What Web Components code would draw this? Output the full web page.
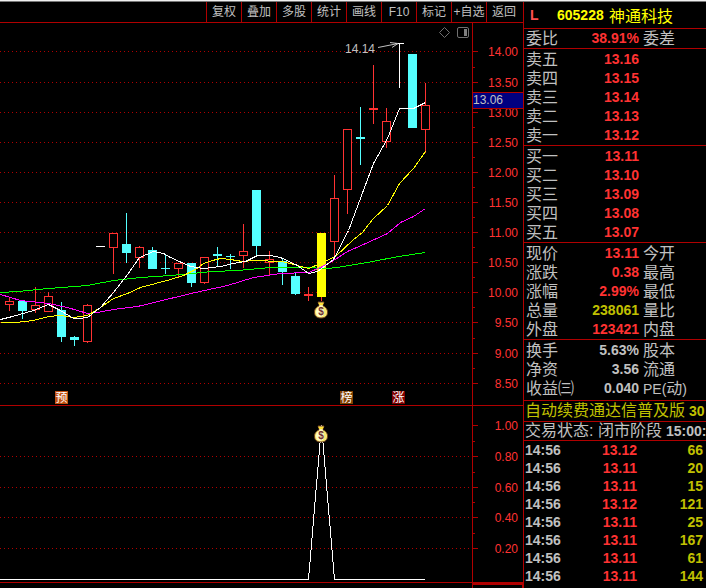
<!DOCTYPE html>
<html lang="zh-CN">
<head>
<meta charset="utf-8">
<title>605228 神通科技</title>
<style>
  body {
    margin: 0;
    background: #000;
    color: #c0c0c0;
    font-family: "Liberation Sans", "Noto Sans CJK SC", sans-serif;
    font-size: 12px;
  }
</style>
</head>
<body>
<stock-terminal>
  <tool-bar slot="tools">
    <tool-button>复权</tool-button>
    <tool-button>叠加</tool-button>
    <tool-button>多股</tool-button>
    <tool-button>统计</tool-button>
    <tool-button>画线</tool-button>
    <tool-button>F10</tool-button>
    <tool-button>标记</tool-button>
    <tool-button>+自选</tool-button>
    <tool-button>返回</tool-button>
  </tool-bar>
  <price-chart slot="chart"></price-chart>
  <signal-chart slot="chart"></signal-chart>

  <quote-title slot="quote" code="605228">神通科技</quote-title>
  <quote-group slot="quote" name="ratio"></quote-group>
  <quote-group slot="quote" name="sell"></quote-group>
  <quote-group slot="quote" name="buy"></quote-group>
  <quote-group slot="quote" name="price"></quote-group>
  <quote-group slot="quote" name="company"></quote-group>
  <quote-note slot="quote" class="notice">自动续费通达信普及版<b slot="value">30</b></quote-note>
  <quote-note slot="quote" class="status">交易状态: 闭市阶段<b slot="value">15:00:</b></quote-note>
  <tick-list slot="quote"></tick-list>
</stock-terminal>

<script>
const quotes = {
  ratio: [['委比', '38.91%', 'up', '委差']],
  sell: [
    ['卖五', '13.16', 'up', ''],
    ['卖四', '13.15', 'up', ''],
    ['卖三', '13.14', 'up', ''],
    ['卖二', '13.13', 'up', ''],
    ['卖一', '13.12', 'up', '']
  ],
  buy: [
    ['买一', '13.11', 'up', ''],
    ['买二', '13.10', 'up', ''],
    ['买三', '13.09', 'up', ''],
    ['买四', '13.08', 'up', ''],
    ['买五', '13.07', 'up', '']
  ],
  price: [
    ['现价', '13.11', 'up', '今开'],
    ['涨跌', '0.38', 'up', '最高'],
    ['涨幅', '2.99%', 'up', '最低'],
    ['总量', '238061', 'vol', '量比'],
    ['外盘', '123421', 'up', '内盘']
  ],
  company: [
    ['换手', '5.63%', '', '股本'],
    ['净资', '3.56', '', '流通'],
    ['收益㈢', '0.040', '', '<small>PE(</small>动<small>)</small>']
  ]
}

const ticks = [
  ['14:56', '13.12', 66],
  ['14:56', '13.11', 20],
  ['14:56', '13.11', 15],
  ['14:56', '13.12', 121],
  ['14:56', '13.11', 25],
  ['14:56', '13.11', 167],
  ['14:56', '13.11', 61],
  ['14:56', '13.11', 144]
]

// x, wick top, wick bottom, body top, body bottom, type
const candles = [
  [9, 298, 310, 301, 304, 'rise'],
  [22, 301, 318, 301, 310, 'fall'],
  [35, 287, 312, 305, 309, 'rise'],
  [48, 292, 311, 296, 311, 'rise'],
  [61, 302, 341, 310, 336, 'fall'],
  [74, 336, 345, 337, 339, 'fall'],
  [87, 304, 342, 305, 341, 'rise'],
  [100, 246, 246, 246, 246, 'flat'],
  [113, 233, 273, 233, 247, 'rise'],
  [126, 213, 262, 244, 252, 'fall'],
  [139, 246, 267, 247, 257, 'rise'],
  [152, 247, 268, 250, 268, 'fall'],
  [165, 254, 273, 268, 268, 'fall'],
  [178, 263, 277, 263, 268, 'rise'],
  [191, 263, 286, 263, 282, 'fall'],
  [204, 257, 283, 257, 282, 'rise'],
  [217, 247, 266, 254, 255, 'fall'],
  [230, 254, 268, 256, 256, 'fall'],
  [243, 224, 267, 251, 255, 'rise'],
  [256, 190, 254, 190, 245, 'fall'],
  [269, 251, 274, 259, 262, 'rise'],
  [282, 259, 284, 261, 271, 'fall'],
  [295, 273, 294, 276, 293, 'fall'],
  [308, 287, 300, 294, 295, 'rise'],
  [321, 233, 300, 233, 296, 'mark'],
  [334, 175, 256, 198, 241, 'rise'],
  [347, 129, 213, 129, 189, 'rise'],
  [360, 107, 164, 137, 138, 'fall'],
  [373, 65, 123, 108, 109, 'rise'],
  [386, 108, 147, 121, 141, 'rise'],
  [399, 43, 87, 43, 43, 'flat'],
  [412, 54, 127, 54, 127, 'fall'],
  [425, 83, 152, 105, 129, 'rise']
]

const averages = {
  '#00ff00': '0,292 18,291 48,288 87,285 113,280 140,277 170,275 212,271 237,270 270,267 303,267 327,268 337,267 367,262 398,256 425,252',
  '#ff00ff': '0,294 20,300 48,303 67,307 87,313 97,312 113,309 137,306 170,298 195,292 227,285 253,277 280,273 308,272 320,267 333,260 347,251 363,244 387,233 400,222 413,216 425,208',
  '#ffff00': '0,322 15,322 33,320 48,316 60,315 73,317 87,315 100,307 113,298 127,293 140,287 170,279 183,275 195,269 203,263 212,260 220,258 230,259 242,261 253,260 282,261 297,265 308,268 320,263 335,256 353,239 362,232 372,219 387,205 399,183 413,168 425,151',
  '#ffffff': '0,319 12,316 33,310 48,304 60,310 73,318 78,318 87,317 100,307 113,292 127,274 139,257 153,251 163,253 170,257 190,266 203,268 220,266 233,263 245,261 257,255 270,255 280,257 297,265 308,273 317,271 333,259 348,230 373,163 387,138 399,108 413,108 417,106 425,102'
}

function define(name, html, setup) {
  const template = document.createElement('template')
  template.innerHTML = html
  customElements.define(name, class extends HTMLElement {
    constructor() {
      super()
      this.attachShadow({ mode: 'open' })
      this.shadowRoot.appendChild(template.content.cloneNode(true))
      if (setup) setup(this, this.shadowRoot)
    }
  })
}

const chartStyle = `
  <style>
    :host { display: block; border-bottom: 1px solid #b00000; }
    svg { display: block; width: 100%; height: auto; }
    text { font-size: 12px; fill: #c0c0c0; }
    .shape { shape-rendering: crispEdges; fill: none; }
    .axis { stroke: #b00000; }
    .dots { stroke: #b00000; stroke-dasharray: 1 3; }
    .scale text { fill: #ff3232; text-anchor: end; }
    .rise { stroke: #ff3232; fill: #000; }
    .fall { stroke: #54ffff; fill: #54ffff; }
    .mark { stroke: #ffff00; fill: #ffff00; }
    .flat { stroke: #fff; }
    .wick { stroke: #ff3232; }
    .badge text { fill: #fff; text-anchor: middle; }
    .bag text { font-size: 10px; font-weight: bold; fill: #703030; text-anchor: middle; }
  </style>
`

// 坐标轴: 主刻度 + 中间刻度
function scale(marks, top, bottom, skipFirst) {
  let shape = `<path class="axis" d="M472.5 ${top}V${bottom}"/>`
  let labels = ''
  marks.forEach(([value, y], i) => {
    if (!(skipFirst && i === 0)) shape += `<path class="dots" d="M0 ${y}.5H471"/>`
    shape += `<path class="axis" d="M472 ${y}.5h6"/>`
    if (i < marks.length - 1) {
      const mid = Math.round((y + marks[i + 1][1]) / 2)
      shape += `<path class="axis" d="M472 ${mid}.5h3"/>`
    }
    labels += `<text x="518" y="${y + 5}">${value}</text>`
  })
  return `<g class="shape">${shape}</g><g class="scale">${labels}</g>`
}

function candle([x, high, low, top, bottom, type]) {
  const c = x + 0.5
  if (type === 'mark') {
    return `<path class="wick" d="M${c} ${bottom}V${low + 1}"/>
      <rect class="mark" x="${x - 3.5}" y="${top + 0.5}" width="8" height="${bottom - top}"/>`
  }
  let out = `<path class="${type}" d="M${c} ${high}V${low + 1}"/>`
  if (bottom - top < 2) {
    for (let y = top; y <= bottom; y++) out += `<path class="${type}" d="M${x - 4} ${y}.5h9"/>`
  } else {
    out += `<rect class="${type}" x="${x - 3.5}" y="${top + 0.5}" width="8" height="${bottom - top}"/>`
  }
  return out
}

function bag(x, y) {
  return `<g class="bag" transform="translate(${x} ${y})">
    <path d="M-3 0L3 0L1.500 3.500C5 5 7 8 6.500 11C6 15 3 16 0 16C-3 16 -6 15 -6.500 11C-7 8 -5 5 -1.500 3.500Z" fill="#f8e870" stroke="#704020"/>
    <ellipse cx="-1" cy="10" rx="4" ry="5" fill="#fffcc8"/>
    <path d="M-3 .5L0 1.500L3 .5L1.500 3.500H-1.500Z" fill="#ffe030"/>
    <path d="M-2 4H2" stroke="#fff"/>
    <text x="0" y="13">$</text>
  </g>`
}

function badge(x, text, fill) {
  return `<g class="badge"><rect x="${x}" y="391" width="13" height="13" fill="${fill}"/>
    <text x="${x + 6.5}" y="402">${text}</text></g>`
}

define('stock-terminal', `
  <style>
    :host { display: block; border-top: 1px solid #f0f0f0; }
    .page { display: flex; border-top: 1px solid #787878; }
    main { flex: 1; min-width: 0; }
    aside { flex: none; width: 182px; border-left: 1px solid #b00000; overflow: hidden; }
    footer { display: flex; justify-content: flex-end; height: 5px; }
    footer i { width: 49px; border: solid #b00000; border-width: 2px 1px 0; }
  </style>
  <div class="page">
    <main>
      <slot name="tools"></slot>
      <slot name="chart"></slot>
      <footer><i></i></footer>
    </main>
    <aside><slot name="quote"></slot></aside>
  </div>
`)

define('tool-bar', `
  <style>
    :host { display: flex; justify-content: flex-end; height: 20px; padding-right: 2px; border-bottom: 1px solid #b00000; }
  </style>
  <slot></slot>
`)

define('tool-button', `
  <style>
    :host { display: block; width: 34px; border-left: 1px solid #b00000; }
    button { width: 100%; height: 20px; padding: 0; border: 0; background: none; color: inherit; font: inherit; line-height: 20px; white-space: nowrap; }
  </style>
  <button type="button"><slot></slot></button>
`)

define('price-chart', chartStyle + '<svg viewBox="0 23 523 382"></svg>', (host, root) => {
  const marks = [51, 82, 112, 142, 172, 202, 232, 262, 292, 322, 353, 383]
    .map((y, i) => [(14 - i / 2).toFixed(2), y])
  const lines = Object.entries(averages)
    .map(([color, points]) => `<polyline stroke="${color}" transform="translate(.5 .5)" points="${points}"/>`)
  root.querySelector('svg').innerHTML = `
    ${scale(marks, 23, 405)}
    <g class="shape">${candles.map(candle).join('')}${lines.join('')}</g>
    <text x="345" y="53">14.14</text>
    <path d="M378 47.500L398 43.500M390 42.500L398 43.500L392 47.500" fill="none" stroke="#c0c0c0"/>
    <path d="M444.500 27.500l5 5l-5 5l-5 -5z" fill="none" stroke="#707070"/>
    <rect x="457.500" y="27.500" width="11" height="10" rx="1.500" fill="none" stroke="#707070"/>
    <rect x="464" y="29" width="3" height="7" fill="#808080"/>
    <rect x="473" y="92" width="50" height="17" fill="#000080"/>
    <path class="shape axis" d="M472 92.500H523M472 108.500H523"/>
    <text x="473" y="104">13.06</text>
    ${bag(321, 302)}
    ${badge(55, '预', '#c05010')}
    ${badge(340, '榜', '#804000')}
    ${badge(392, '涨', '#800000')}
  `
})

define('signal-chart', chartStyle + '<svg viewBox="0 406 523 176"></svg>', (host, root) => {
  const marks = [['1.00', 425], ['0.80', 456], ['0.60', 487], ['0.40', 517], ['0.20', 548]]
  root.querySelector('svg').innerHTML = `
    ${scale(marks, 406, 582, true)}
    <path class="shape flat" d="M0 579.500H308.500L321.500 425.500L334.500 579.500H425"/>
    ${bag(321, 426)}
  `
})

define('quote-title', `
  <style>
    :host { display: flex; align-items: center; height: 26px; padding-left: 6px; color: #ffff00; font-size: 16px; }
    b { font-size: 14px; }
    .flag { width: 27px; color: #ff5050; }
    .code { width: 52px; }
  </style>
  <b class="flag">L</b><b class="code"></b><slot></slot>
`, (host, root) => {
  root.querySelector('.code').textContent = host.getAttribute('code')
})

define('quote-group', `
  <style>
    :host { display: block; border-top: 1px solid #b00000; }
    :host([name=sell]), :host([name=buy]), :host([name=price]) { padding-top: 1px; }
    :host([name=company]) { padding: 1px 0 2px; }
    table { width: 100%; table-layout: fixed; border-collapse: collapse; line-height: 19px; }
    th, td { height: 19px; padding: 0; font-size: 16px; font-weight: normal; text-align: left; white-space: nowrap; }
    th:first-child { width: 50px; text-indent: 2px; }
    td { width: 65px; font-size: 14px; font-weight: bold; text-align: right; }
    th:last-child { text-indent: 4px; }
    small { font-size: 14px; line-height: 1; }
    .up { color: #ff3232; }
    .vol { color: #c0c000; }
  </style>
  <table><tbody></tbody></table>
`, (host, root) => {
  root.querySelector('tbody').innerHTML = quotes[host.getAttribute('name')]
    .map(([label, value, type, next]) => `<tr><th>${label}</th><td class="${type}">${value}</td><th>${next}</th></tr>`)
    .join('')
})

define('quote-note', `
  <style>
    :host { display: flex; gap: 4px; height: 20px; padding-left: 1px; border-top: 1px solid #b00000; font-size: 16px; line-height: 20px; white-space: nowrap; overflow: hidden; }
    :host(.notice) { color: #c0c000; }
    :host(.status) { height: 18px; line-height: 18px; }
    ::slotted(b) { font-size: 14px; }
  </style>
  <span><slot></slot></span><slot name="value"></slot>
`)

define('tick-list', `
  <style>
    :host { display: block; border-top: 1px solid #b00000; }
    table { width: 100%; table-layout: fixed; border-collapse: collapse; font-size: 14px; font-weight: bold; line-height: 18px; }
    td { height: 18px; padding: 0; text-align: right; }
    td:first-child { width: 60px; padding-left: 1px; text-align: left; }
    td:nth-child(2) { width: 52px; color: #ff3232; }
    td:last-child { padding-right: 3px; color: #c0c000; }
  </style>
  <table><tbody></tbody></table>
`, (host, root) => {
  root.querySelector('tbody').innerHTML = ticks
    .map(row => `<tr>${row.map(cell => `<td>${cell}</td>`).join('')}</tr>`)
    .join('')
})
</script>
</body>
</html>
